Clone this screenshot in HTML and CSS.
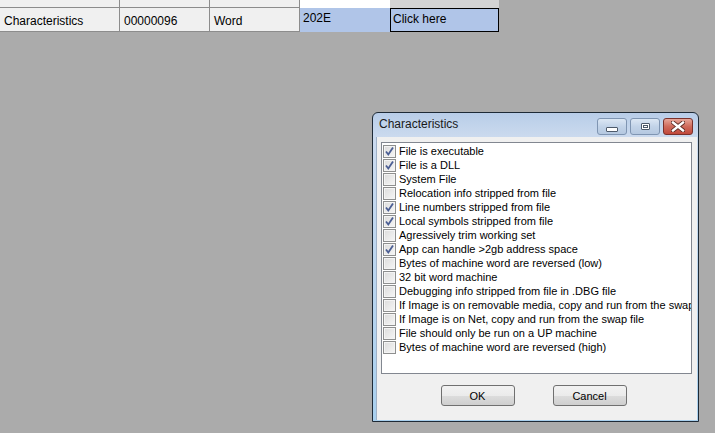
FILE: index.html
```html
<!DOCTYPE html>
<html lang="en">
<head>
<meta charset="UTF-8">
<meta name="viewport" content="width=device-width, initial-scale=1.0">
<title>Characteristics</title>
<link rel="stylesheet" href="styles.css">
</head>
<body>
    <div class="grid">
        <div class="cell head"></div>
        <div class="cell head"></div>
        <div class="cell head"></div>
        <div class="cell head white"></div>
        <div class="cell head dim"></div>
        <div class="cell">Characteristics</div>
        <div class="cell">00000096</div>
        <div class="cell">Word</div>
        <div class="cell sel">202E</div>
        <div class="cell sel focus">Click here</div>
    </div>

    <div class="dialog">
        <div class="title">
            <span class="caption">Characteristics</span>
            <div class="wbtns">
                <span class="wbtn min"><i></i></span>
                <span class="wbtn max"><i></i></span>
                <span class="wbtn close">
                    <svg width="14" height="11" viewBox="0 0 14 11">
                        <path d="M2 1.5 L12 9.5 M12 1.5 L2 9.5" stroke="#5a2a24" stroke-width="4.2" stroke-linecap="square"/>
                        <path d="M2 1.5 L12 9.5 M12 1.5 L2 9.5" stroke="#fff" stroke-width="2.4" stroke-linecap="square"/>
                    </svg>
                </span>
            </div>
        </div>
        <div class="client">
            <ul class="list">
                <li><span class="box on"><svg width="11" height="11" viewBox="0 0 11 11"><path d="M2 5.5 L4.3 8.5 L9 1.5" fill="none" stroke="#4b5e94" stroke-width="1.8"/></svg></span>File is executable</li>
                <li><span class="box on"><svg width="11" height="11" viewBox="0 0 11 11"><path d="M2 5.5 L4.3 8.5 L9 1.5" fill="none" stroke="#4b5e94" stroke-width="1.8"/></svg></span>File is a DLL</li>
                <li><span class="box"></span>System File</li>
                <li><span class="box"></span>Relocation info stripped from file</li>
                <li><span class="box on"><svg width="11" height="11" viewBox="0 0 11 11"><path d="M2 5.5 L4.3 8.5 L9 1.5" fill="none" stroke="#4b5e94" stroke-width="1.8"/></svg></span>Line numbers stripped from file</li>
                <li><span class="box on"><svg width="11" height="11" viewBox="0 0 11 11"><path d="M2 5.5 L4.3 8.5 L9 1.5" fill="none" stroke="#4b5e94" stroke-width="1.8"/></svg></span>Local symbols stripped from file</li>
                <li><span class="box"></span>Agressively trim working set</li>
                <li><span class="box on"><svg width="11" height="11" viewBox="0 0 11 11"><path d="M2 5.5 L4.3 8.5 L9 1.5" fill="none" stroke="#4b5e94" stroke-width="1.8"/></svg></span>App can handle &gt;2gb address space</li>
                <li><span class="box"></span>Bytes of machine word are reversed (low)</li>
                <li><span class="box"></span>32 bit word machine</li>
                <li><span class="box"></span>Debugging info stripped from file in .DBG file</li>
                <li><span class="box"></span>If Image is on removable media, copy and run from the swap file</li>
                <li><span class="box"></span>If Image is on Net, copy and run from the swap file</li>
                <li><span class="box"></span>File should only be run on a UP machine</li>
                <li><span class="box"></span>Bytes of machine word are reversed (high)</li>
            </ul>
            <div class="actions">
                <button class="btn">OK</button>
                <button class="btn">Cancel</button>
            </div>
        </div>
    </div>
</body>
</html>
```

FILE: styles.css
```css
body {
    margin: 0;
    width: 715px;
    height: 433px;
    background: #ababab;
    font: 12px/14px "Liberation Sans", Arial, sans-serif;
    color: #000;
    overflow: hidden;
}
.grid {
    display: grid;
    grid-template-columns: 120px 90px 90px 90px 109px;
    grid-template-rows: 8px 24px;
    width: 499px;
}
.cell {
    background: #f0f0f0;
    border-right: 1px solid #8c8c8c;
    border-bottom: 1px solid #8c8c8c;
    padding: 6px 0 0 4px;
    box-sizing: border-box;
    white-space: nowrap;
    overflow: hidden;
}
.cell.head {
    padding: 0;
}
.cell.white {
    background: #fff;
    border: 0;
}
.cell.dim {
    background: #d4d4d4;
    border: 0;
}
.cell.sel {
    background: #b0c5e8;
    border: 0;
    padding: 3px 0 0 3px;
}
.cell.focus {
    border: 1px solid #000;
    padding: 3px 0 0 2px;
}

/* dialog window */
.dialog {
    position: absolute;
    left: 372px;
    top: 112px;
    width: 327px;
    height: 310px;
    box-sizing: border-box;
    border: 1px solid #1e2a36;
    border-radius: 6px 6px 0 0;
    background: linear-gradient(#b8cde8, #cbdaee 24px, #a9d0ee);
    display: flex;
    flex-direction: column;
    padding: 0 1px 1px 3px;
}
.title {
    height: 24px;
    flex: none;
    display: flex;
    align-items: center;
    justify-content: space-between;
    padding-left: 3px;
}
.caption {
    font: 12px "Liberation Sans", Arial, sans-serif;
    color: #1a1a1a;
    padding-bottom: 2px;
}
.wbtns {
    display: flex;
    gap: 3px;
    margin-top: 3px;
    margin-right: 4px;
}
.wbtn {
    width: 30px;
    height: 17px;
    box-sizing: border-box;
    border: 1px solid #7f95b2;
    border-radius: 3px;
    background: linear-gradient(#dce7f4, #c2d3e8 50%, #b5c8e0);
    display: flex;
    align-items: center;
    justify-content: center;
}
.wbtn.min i {
    display: block;
    width: 10px;
    height: 3px;
    margin-top: 5px;
    background: #fff;
    border: 1px solid #4d5a6b;
    border-radius: 1px;
}
.wbtn.max i {
    display: block;
    width: 7px;
    height: 5px;
    border: 1px solid #4d5a6b;
    box-shadow: inset 0 0 0 1px #fff, inset 0 0 0 2px #4d5a6b;
    background: #fff;
    border-radius: 1px;
}
.wbtn.close {
    border-color: #7a302a;
    background: linear-gradient(#e7a699, #cf6a5b 50%, #c0483a);
}
.client {
    flex: 1;
    background: #f0f0f0;
    border-left: 1px solid #9fb1c7;
    padding: 5px 5px 0 4px;
    display: flex;
    flex-direction: column;
}

/* check list */
.list {
    margin: 0;
    padding: 1px 0 0 1px;
    list-style: none;
    height: 232px;
    box-sizing: border-box;
    border: 1px solid #828790;
    background: #fff;
    overflow: hidden;
}
.list li {
    height: 14px;
    display: flex;
    align-items: center;
    white-space: nowrap;
    font: 11px/14px "Liberation Sans", Arial, sans-serif;
}
.box {
    flex: none;
    width: 13px;
    height: 13px;
    box-sizing: border-box;
    margin-right: 3px;
    border: 1px solid #8e8f8f;
    background: linear-gradient(135deg, #dcdcdc, #f6f6f6);
    box-shadow: inset 0 0 0 1px #f4f4f4;
    display: flex;
    align-items: center;
    justify-content: center;
}

/* buttons */
.actions {
    display: flex;
    justify-content: center;
    gap: 38px;
    margin-top: 11px;
    padding-right: 6px;
}
.btn {
    width: 74px;
    height: 21px;
    border: 1px solid #707070;
    border-radius: 3px;
    background: linear-gradient(#f2f2f2, #ebebeb 50%, #dddddd 51%, #cfcfcf);
    font: 11px "Liberation Sans", Arial, sans-serif;
    color: #000;
    padding: 0;
}
```
